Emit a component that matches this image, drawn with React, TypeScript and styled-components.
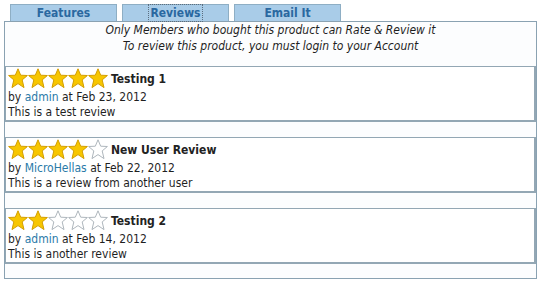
import React from 'react'
import styled, { createGlobalStyle } from 'styled-components'

const GlobalStyle = createGlobalStyle`
    body {
        margin: 0;
        background: #ffffff;
        font-family: "DejaVu Sans Condensed", "Liberation Sans", sans-serif;
        font-size: 12px;
        color: #1f1f1f;
    }
`

type Review = {
    rating: number
    title: string
    author: string
    date: string
    text: string
}

const reviews: Review[] = [
    { rating: 5, title: 'Testing 1', author: 'admin', date: 'Feb 23, 2012', text: 'This is a test review' },
    { rating: 4, title: 'New User Review', author: 'MicroHellas', date: 'Feb 22, 2012', text: 'This is a review from another user' },
    { rating: 2, title: 'Testing 2', author: 'admin', date: 'Feb 14, 2012', text: 'This is another review' },
]

const Star = ({ filled }: { filled: boolean }) => (
    <svg width="20" height="21" viewBox="0 0 20 21">
        <polygon
            points="10,0.8 12.7,7.2 19.4,7.5 14.2,11.9 16,19.6 10,15.6 4,19.6 5.8,11.9 0.6,7.5 7.3,7.2"
            fill={filled ? '#f7c600' : '#ffffff'}
            stroke={filled ? '#d39e00' : '#aeb6bc'}
            strokeWidth="1"
            strokeLinejoin="round"
        />
    </svg>
)

const App = () => {
    return (
        <Container>
            <GlobalStyle />
            <Tabs>
                <Tab>Features</Tab>
                <Tab><Focused>Reviews</Focused></Tab>
                <Tab>Email It</Tab>
            </Tabs>
            <Panel>
                <Notice>
                    <p>Only Members who bought this product can Rate &amp; Review it</p>
                    <p>To review this product, you must login to your Account</p>
                </Notice>
                {reviews.map((r, i) => (
                    <ReviewBox key={i}>
                        <Head>
                            <Stars>
                                {[0, 1, 2, 3, 4].map(n => <Star key={n} filled={n < r.rating} />)}
                            </Stars>
                            <Title>{r.title}</Title>
                        </Head>
                        <Line>by <Author>{r.author}</Author> at {r.date}</Line>
                        <Line>{r.text}</Line>
                    </ReviewBox>
                ))}
            </Panel>
        </Container>
    )
}

export default App

const Container = styled.div`
    padding: 4px 0 0 4px;
    width: 533px;
`
const Tabs = styled.div`
    display: flex;
    gap: 5px;
    padding-left: 6px;
`
const Tab = styled.div`
    width: 105px;
    height: 16px;
    box-sizing: content-box;
    background: #a9cce8;
    border: 1px solid #8eaec4;
    border-bottom: none;
    display: flex;
    justify-content: center;
    align-items: center;
    color: #2a68a0;
    font-weight: bold;
    font-size: 12px;
`
const Focused = styled.span`
    outline: 1px dotted #5a6e80;
    padding: 0 1px;
    line-height: 16px;
`
const Panel = styled.div`
    border: 1px solid #8aa2b2;
    background: #fcfdfe;
    padding-bottom: 14px;
    display: flex;
    flex-direction: column;
    gap: 15px;
`
const Notice = styled.div`
    text-align: center;
    font-style: italic;
    line-height: 16px;
    margin-bottom: -3px;
    p {
        margin: 0;
    }
`
const ReviewBox = styled.div`
    border: 1px solid #93a7b4;
    border-right-width: 2px;
    border-bottom-width: 2px;
    background: #ffffff;
    height: 53px;
    padding: 0 0 0 2px;
`
const Head = styled.div`
    display: flex;
    align-items: center;
    height: 23px;
`
const Stars = styled.div`
    display: flex;
    margin-right: 3px;
`
const Title = styled.span`
    font-weight: bold;
    color: #222;
`
const Line = styled.div`
    line-height: 15px;
`
const Author = styled.span`
    color: #2a7aa8;
`
